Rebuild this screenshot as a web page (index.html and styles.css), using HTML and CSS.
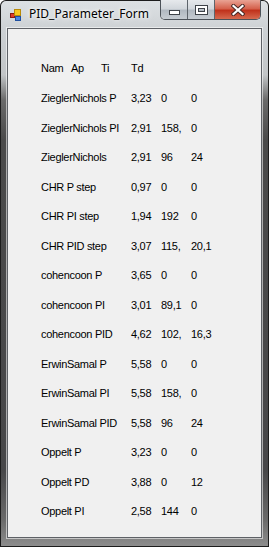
FILE: index.html
```html
<!DOCTYPE html>
<html lang="en">
<head>
    <meta charset="UTF-8">
    <title>PID_Parameter_Form</title>
    <link rel="stylesheet" href="styles.css">
</head>
<body>
    <div class="window">
        <div class="titlebar">
            <svg class="app-icon" width="16" height="16" viewBox="0 0 16 16">
                <rect x="2.5" y="6.5" width="4" height="4" fill="#e03a2a" stroke="#8a1a10"/>
                <rect x="6.5" y="2.5" width="6" height="6" fill="#f7c81e" stroke="#b88a08"/>
                <rect x="7.5" y="9.5" width="5" height="4" fill="#4a86e0" stroke="#2050a0"/>
            </svg>
            <span class="title">PID_Parameter_Form</span>
            <div class="caption-buttons">
                <div class="cap-btn cap-min"><span class="min-glyph"></span></div>
                <div class="cap-btn cap-max"><span class="max-glyph"></span></div>
                <div class="cap-btn cap-close">
                    <svg width="14" height="12" viewBox="0 0 14 12">
                        <path d="M2.5 2 L11.5 10 M11.5 2 L2.5 10" stroke="#4a2a26" stroke-width="4.2" stroke-linecap="square"/>
                        <path d="M2.5 2 L11.5 10 M11.5 2 L2.5 10" stroke="#ffffff" stroke-width="2.2" stroke-linecap="square"/>
                    </svg>
                </div>
            </div>
        </div>

        <div class="client">
            <div class="row head">
                <span>Nam</span><span>Ap</span><span>Ti</span><span>Td</span>
            </div>
            <div class="row"><span>ZieglerNichols P</span><span>3,23</span><span>0</span><span>0</span></div>
            <div class="row"><span>ZieglerNichols PI</span><span>2,91</span><span>158,</span><span>0</span></div>
            <div class="row"><span>ZieglerNichols</span><span>2,91</span><span>96</span><span>24</span></div>
            <div class="row"><span>CHR P step</span><span>0,97</span><span>0</span><span>0</span></div>
            <div class="row"><span>CHR PI step</span><span>1,94</span><span>192</span><span>0</span></div>
            <div class="row"><span>CHR PID step</span><span>3,07</span><span>115,</span><span>20,1</span></div>
            <div class="row"><span>cohencoon P</span><span>3,65</span><span>0</span><span>0</span></div>
            <div class="row"><span>cohencoon PI</span><span>3,01</span><span>89,1</span><span>0</span></div>
            <div class="row"><span>cohencoon PID</span><span>4,62</span><span>102,</span><span>16,3</span></div>
            <div class="row"><span>ErwinSamal P</span><span>5,58</span><span>0</span><span>0</span></div>
            <div class="row"><span>ErwinSamal PI</span><span>5,58</span><span>158,</span><span>0</span></div>
            <div class="row"><span>ErwinSamal PID</span><span>5,58</span><span>96</span><span>24</span></div>
            <div class="row"><span>Oppelt P</span><span>3,23</span><span>0</span><span>0</span></div>
            <div class="row"><span>Oppelt PD</span><span>3,88</span><span>0</span><span>12</span></div>
            <div class="row"><span>Oppelt PI</span><span>2,58</span><span>144</span><span>0</span></div>
        </div>
    </div>
</body>
</html>
```

FILE: styles.css
```css
body {
    margin: 0;
    background-color: #ffffff;
}
.window {
    width: 269px;
    height: 547px;
    box-sizing: border-box;
    border-radius: 6px 6px 0 0;
    background: linear-gradient(to bottom, #dde1e4 0, #cdd1d4 30px, #c2c5c7 75px, #6a6a6a 100px, #4a4a4a 140px, #474749 470px, #6a6a6a 520px, #8e8e8e 547px);
    box-shadow: inset 0 0 0 1px #1c1c1c;
    overflow: hidden;
}
.titlebar {
    height: 28px;
    display: flex;
    align-items: flex-start;
}
.app-icon {
    margin-left: 8px;
    margin-top: 7px;
}
.title {
    margin-left: 5px;
    margin-top: 6px;
    font-family: "Noto Sans", "Open Sans", sans-serif;
    font-size: 12px;
    line-height: 16px;
    color: #000000;
    text-shadow: 0 0 6px #ffffff, 0 0 3px #ffffff;
}
.caption-buttons {
    margin-left: auto;
    margin-right: 8px;
    display: flex;
    height: 20px;
    border: 1px solid #4c5259;
    border-top: none;
    border-radius: 0 0 5px 5px;
    overflow: hidden;
    box-sizing: border-box;
}
.cap-btn {
    display: flex;
    align-items: center;
    justify-content: center;
    height: 19px;
    box-sizing: border-box;
}
.cap-min,
.cap-max {
    width: 27px;
    border-right: 1px solid #5d646b;
    background: linear-gradient(to bottom, #e6e9ec 0, #d2d7dc 45%, #b1b9c1 55%, #c6ccd2 100%);
}
.cap-close {
    width: 45px;
    background: linear-gradient(to bottom, #e9a394 0, #d5624d 45%, #c0321c 55%, #d66a4f 100%);
}
.min-glyph {
    width: 9px;
    height: 3px;
    margin-top: 5px;
    background-color: #ffffff;
    border: 1px solid #3e4349;
}
.max-glyph {
    width: 7px;
    height: 4px;
    background-color: transparent;
    border: 2px solid #ffffff;
    outline: 1px solid #3e4349;
    box-shadow: inset 0 0 0 1px #3e4349;
}
.client {
    margin-left: 7px;
    width: 255px;
    height: 510px;
    box-sizing: border-box;
    border: 1px solid #5e6166;
    box-shadow: 0 0 0 1px rgba(255, 255, 255, 0.55);
    background-color: #f0f0f0;
    padding: 33px 0 0 33px;
    font-family: "Liberation Sans", Arial, sans-serif;
    font-size: 11px;
    line-height: 13px;
    letter-spacing: -0.3px;
    color: #000000;
}
.row {
    display: grid;
    grid-template-columns: 90px 30px 30px auto;
    height: 29.5px;
    white-space: nowrap;
}
.row.head {
    grid-template-columns: 30px 30px 30px auto;
    height: 30px;
}
```
